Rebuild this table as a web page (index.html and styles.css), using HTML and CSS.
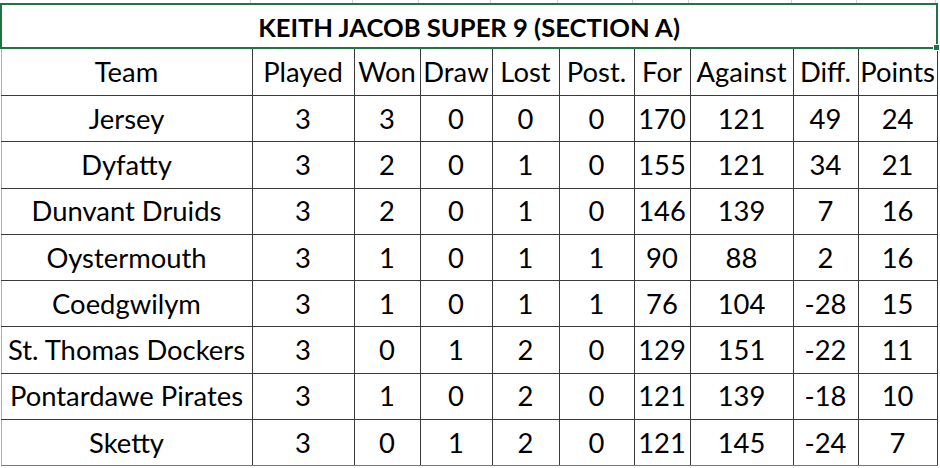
FILE: index.html
```html
<!DOCTYPE html>
<html>
<head>
<meta charset="utf-8">
<link rel="stylesheet" href="styles.css">
</head>
<body>
<div class="sheet">
  <div class="strip">
    <span class="sc w1"></span><span class="sc w2"></span><span class="sc w3"></span><span class="sc w4"></span><span class="sc w5"></span><span class="sc w6"></span><span class="sc w7"></span><span class="sc w8"></span><span class="sc w9"></span><span class="sc w10"></span>
  </div>
  <table class="league">
    <colgroup>
      <col class="w1"><col class="w2"><col class="w3"><col class="w4"><col class="w5"><col class="w6"><col class="w7"><col class="w8"><col class="w9"><col class="w10">
    </colgroup>
    <tr class="title-row"><td colspan="10" class="title"><span class="title-text">KEITH JACOB SUPER 9 (SECTION A)</span><span class="handle"></span></td></tr>
    <tr class="head-row"><td>Team</td><td>Played</td><td>Won</td><td>Draw</td><td>Lost</td><td>Post.</td><td>For</td><td>Against</td><td>Diff.</td><td>Points</td></tr>
    <tr><td>Jersey</td><td>3</td><td>3</td><td>0</td><td>0</td><td>0</td><td>170</td><td>121</td><td>49</td><td>24</td></tr>
    <tr><td>Dyfatty</td><td>3</td><td>2</td><td>0</td><td>1</td><td>0</td><td>155</td><td>121</td><td>34</td><td>21</td></tr>
    <tr><td>Dunvant Druids</td><td>3</td><td>2</td><td>0</td><td>1</td><td>0</td><td>146</td><td>139</td><td>7</td><td>16</td></tr>
    <tr><td>Oystermouth</td><td>3</td><td>1</td><td>0</td><td>1</td><td>1</td><td>90</td><td>88</td><td>2</td><td>16</td></tr>
    <tr><td>Coedgwilym</td><td>3</td><td>1</td><td>0</td><td>1</td><td>1</td><td>76</td><td>104</td><td>-28</td><td>15</td></tr>
    <tr><td>St. Thomas Dockers</td><td>3</td><td>0</td><td>1</td><td>2</td><td>0</td><td>129</td><td>151</td><td>-22</td><td>11</td></tr>
    <tr><td>Pontardawe Pirates</td><td>3</td><td>1</td><td>0</td><td>2</td><td>0</td><td>121</td><td>139</td><td>-18</td><td>10</td></tr>
    <tr class="last-row"><td>Sketty</td><td>3</td><td>0</td><td>1</td><td>2</td><td>0</td><td>121</td><td>145</td><td>-24</td><td>7</td></tr>
  </table>
</div>
</body>
</html>
```
FILE: styles.css
```css
html, body {
  margin: 0;
  padding: 0;
  background: #ffffff;
}
body {
  font-family: Lato, "Open Sans", sans-serif;
  color: #000000;
}
.sheet {
  width: 940px;
  height: 468px;
  overflow: hidden;
  background: #ffffff;
}
.strip {
  display: flex;
  height: 3px;
}
.sc {
  display: block;
  height: 3px;
  border-right: 1px solid #d4d4d4;
  box-sizing: border-box;
}
.w1 { width: 251px; }
.w2 { width: 102px; }
.w3 { width: 66px; }
.w4 { width: 72px; }
.w5 { width: 67px; }
.w6 { width: 75px; }
.w7 { width: 56px; }
.w8 { width: 103px; }
.w9 { width: 65px; }
.w10 { width: 79px; }
.league {
  table-layout: fixed;
  border-collapse: collapse;
  width: 937px;
  margin-left: 0;
}
.league td {
  border: 1px solid #3a3a3a;
  text-align: center;
  vertical-align: middle;
  padding: 0;
  font-size: 27.4px;
  line-height: 30px;
  height: 45.3px;
  white-space: nowrap;
  overflow: hidden;
}
.league tr td:first-child {
  border-left: 1px solid #b0b0b0;
}
.league tr.last-row td {
  border-bottom: 1px solid #777777;
}
.league td.title {
  border: 2px solid #217346;
  height: 42px;
  font-size: 25.6px;
  font-weight: 700;
  position: relative;
  overflow: visible;
}
.league tr td.title:first-child {
  border-left: 2px solid #217346;
}
.title-text {
  position: relative;
  left: 0;
  top: 1px;
}
.head-row td {
  height: 46px;
}
.handle {
  position: absolute;
  right: -4px;
  bottom: -4px;
  width: 5px;
  height: 5px;
  background: #217346;
  border: 1px solid #ffffff;
}
```
